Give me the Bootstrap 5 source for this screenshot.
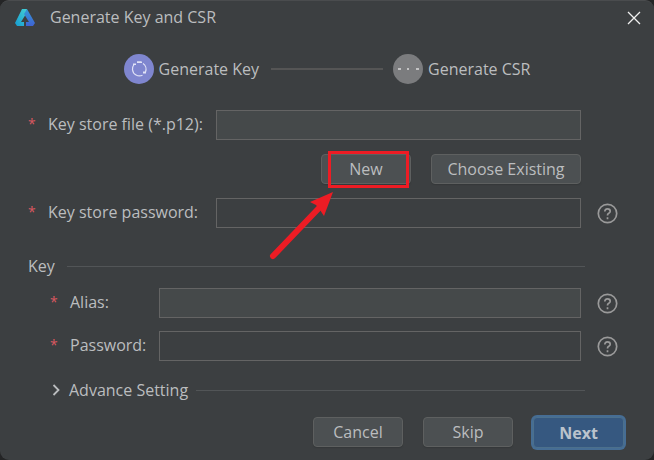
<!DOCTYPE html>
<html lang="en" data-bs-theme="dark">
<head>
<meta charset="utf-8">
<meta name="viewport" content="width=device-width, initial-scale=1">
<title>Generate Key and CSR</title>
<link href="https://cdn.jsdelivr.net/npm/bootstrap@5.3.0/dist/css/bootstrap.min.css" rel="stylesheet">
<style>
  body { background: #242526; color: #bbbdbf; font-family: "Open Sans", "Noto Sans", sans-serif; font-size: 16px; line-height: 24px; }
  .dialog { background: #3c3f41; border-top: 1px solid #4a4c4e; border-radius: 9px; }
  .titlebar { height: 33px; padding: 0 13px 0 15px; }
  .title-text { margin-left: 15px; padding-bottom: 2px; }
  .close-btn { width: 14px; height: 24px; color: #f0f0f0; line-height: 0; }
  .steps { padding: 20px 0 26px; }
  .step { gap: 5px; }
  .step-line { width: 112px; height: 2px; background: #555; margin: 0 10px 0 12px; }
  .form-area { padding: 0 36px 0 28px; }
  .req { width: 20px; color: #db5860; flex: none; font-size: 14px; }
  .lbl-store, .lbl-key { flex: none; padding-bottom: 2px; }
  .lbl-store { width: 188px; }
  .lbl-key { width: 109px; }
  .sub { padding-left: 22px; }
  .field { height: 30px; min-width: 0; padding: 0 6px; background: #3c3f41; border: 1px solid #646464; border-radius: 0; color: #bbbdbf; font-size: 16px; }
  .field.filled { background: #45494a; }
  .help { width: 21px; height: 21px; margin-left: 16px; flex: none; color: #9a9a9a; line-height: 0; }
  .file-actions { gap: 20px; padding: 14px 37px 14px 0; }
  .dlg-btn { height: 30px; width: 90px; padding: 0; background: #4c5052; border: 1px solid #5e6060; border-radius: 4px; color: #bbbdbf; font-size: 16px; line-height: 24px; box-shadow: 0 1px 1px #35383a; }
  .dlg-btn:hover { background: #55595b; color: #d0d2d4; }
  .wide { width: 150px; }
  .dlg-btn.next { width: 91px; height: 31px; margin-right: 2px; background: #365880; border: 1px solid #4c708c; box-shadow: 0 0 0 2px #466d94; color: #bbc3cc; font-weight: 700; }
  .dlg-btn.next:hover { background: #3d6491; }
  .rule { height: 1px; background: #525557; margin-right: 33px; }
  .key-head { gap: 12px; padding: 26px 0 10px; }
  .key-pass { margin-top: 13px; }
  .adv-head { gap: 8px; padding-top: 17px; padding-bottom: 12px; }
  .adv-btn { gap: 7px; color: #bbbdbf; font-size: 16px; line-height: 24px; }
  .footer-bar { gap: 20px; padding: 0 28px 12px; }
  .mark-box { position: absolute; left: 7px; top: -3px; width: 81px; height: 37px; border: 3px solid #ed1c24; pointer-events: none; }
  .mark-arrow { position: absolute; left: -53px; top: 36px; z-index: 2; pointer-events: none; }
</style>
</head>
<body>
<main class="dialog min-vh-100 d-flex flex-column">
  <header class="titlebar d-flex align-items-center">
    <svg width="20" height="18" viewBox="0 0 20 18" aria-hidden="true">
      <defs>
        <linearGradient id="lg" x1="0" y1="1" x2="1" y2="0"><stop offset="0" stop-color="#169bd0"/><stop offset="1" stop-color="#43cfd4"/></linearGradient>
        <linearGradient id="rg" x1="0" y1="0" x2="0" y2="1"><stop offset="0" stop-color="#3498d8"/><stop offset="1" stop-color="#3f63d2"/></linearGradient>
      </defs>
      <path d="M7 0h5l-1 5-5 8h3v4H2l-2-3z" fill="url(#lg)"/>
      <path d="M12 0l8 14-2 3h-7v-4h3L9 5z" fill="url(#rg)"/>
    </svg>
    <span class="title-text">Generate Key and CSR</span>
    <button type="button" class="close-btn btn p-0 border-0 ms-auto" aria-label="Close">
      <svg width="14" height="14" viewBox="0 0 14 14" fill="none" stroke="currentColor" stroke-width="1.3"><path d="M1 1l12 12M13 1L1 13"/></svg>
    </button>
  </header>

  <div class="steps d-flex justify-content-center align-items-center">
    <div class="step d-flex align-items-center">
      <svg width="30" height="30" viewBox="0 0 30 30" fill="none" aria-hidden="true">
        <circle cx="15" cy="15" r="15" fill="#7f86cf"/>
        <g stroke="#e0e2f6" stroke-width="1.2"><path d="M13 8.200h4M19 9.500a7 7 0 0 1 2.500 8.500"/><path d="M18.500 21.200a7 7 0 0 1-10-5.500q-.2-3 1.500-5.200"/></g>
        <path d="M19 17.500h3v2h-3zM9 9.500h3v1.500H9zM13 7.500h5v1.500h-5z" fill="#e0e2f6"/>
      </svg>
      <span>Generate Key</span>
    </div>
    <div class="step-line"></div>
    <div class="step d-flex align-items-center">
      <svg width="30" height="30" viewBox="0 0 30 30" aria-hidden="true">
        <circle cx="15" cy="15" r="15" fill="#7b7c7e"/>
        <path d="M5 14h3v2H5zM14 14h2v2h-2zM23 14h3v2h-3z" fill="#c4c4c5"/>
      </svg>
      <span>Generate CSR</span>
    </div>
  </div>

  <form class="form-area">
    <div class="d-flex align-items-center">
      <label class="lbl-store d-flex" for="storeFile"><span class="req">*</span>Key store file (*.p12):</label>
      <input class="field filled flex-grow-1" id="storeFile" type="text">
      <span class="help"></span>
    </div>
    <div class="file-actions d-flex justify-content-end">
      <div class="position-relative">
        <button type="button" class="dlg-btn btn">New</button>
        <span class="mark-box"></span>
        <svg class="mark-arrow" width="68" height="70" viewBox="0 0 68 70" aria-hidden="true">
          <path d="M5 66L52 17" stroke="#ed1c24" stroke-width="6" stroke-linecap="round"/>
          <path d="M65 2L56 26L52 20L48 15L42 12z" fill="#ed1c24"/>
        </svg>
      </div>
      <button type="button" class="dlg-btn wide btn">Choose Existing</button>
    </div>
    <div class="d-flex align-items-center">
      <label class="lbl-store d-flex" for="storePass"><span class="req">*</span>Key store password:</label>
      <input class="field flex-grow-1" id="storePass" type="password">
      <button type="button" class="help btn p-0 border-0" aria-label="Key store password help"><svg width="21" height="21" viewBox="0 0 21 21" fill="none" stroke="currentColor" stroke-width="1.700"><circle cx="10.500" cy="10.500" r="9.200"/><path d="M7.800 8.600q0-2.800 2.700-2.800t2.700 2.400q0 1.300-1.400 2.100t-1.300 2.200M10.500 14.200v2"/></svg></button>
    </div>

    <div class="key-head d-flex align-items-center">
      <span>Key</span><div class="rule flex-grow-1"></div>
    </div>
    <div class="sub d-flex align-items-center">
      <label class="lbl-key d-flex" for="alias"><span class="req">*</span>Alias:</label>
      <input class="field filled flex-grow-1" id="alias" type="text">
      <button type="button" class="help btn p-0 border-0" aria-label="Alias help"><svg width="21" height="21" viewBox="0 0 21 21" fill="none" stroke="currentColor" stroke-width="1.700"><circle cx="10.500" cy="10.500" r="9.200"/><path d="M7.800 8.600q0-2.800 2.700-2.800t2.700 2.400q0 1.300-1.400 2.100t-1.300 2.200M10.500 14.200v2"/></svg></button>
    </div>
    <div class="sub key-pass d-flex align-items-center">
      <label class="lbl-key d-flex" for="keyPass"><span class="req">*</span>Password:</label>
      <input class="field flex-grow-1" id="keyPass" type="password">
      <button type="button" class="help btn p-0 border-0" aria-label="Password help"><svg width="21" height="21" viewBox="0 0 21 21" fill="none" stroke="currentColor" stroke-width="1.700"><circle cx="10.500" cy="10.500" r="9.200"/><path d="M7.800 8.600q0-2.800 2.700-2.800t2.700 2.400q0 1.300-1.400 2.100t-1.300 2.200M10.500 14.200v2"/></svg></button>
    </div>
    <div class="adv-head sub d-flex align-items-center">
      <button type="button" class="adv-btn btn p-0 border-0 d-flex align-items-center" aria-expanded="false">
        <svg width="12" height="12" viewBox="0 0 12 12" fill="none" stroke="currentColor" stroke-width="1.800" aria-hidden="true"><path d="M3.500 1l5 5-5 5"/></svg>Advance Setting
      </button>
      <div class="rule flex-grow-1"></div>
    </div>
  </form>

  <footer class="footer-bar d-flex justify-content-end align-items-start mt-auto">
    <button type="button" class="dlg-btn btn">Cancel</button>
    <button type="button" class="dlg-btn btn">Skip</button>
    <button type="button" class="dlg-btn next btn">Next</button>
  </footer>
</main>
<script src="https://cdn.jsdelivr.net/npm/bootstrap@5.3.0/dist/js/bootstrap.bundle.min.js"></script>
</body>
</html>
